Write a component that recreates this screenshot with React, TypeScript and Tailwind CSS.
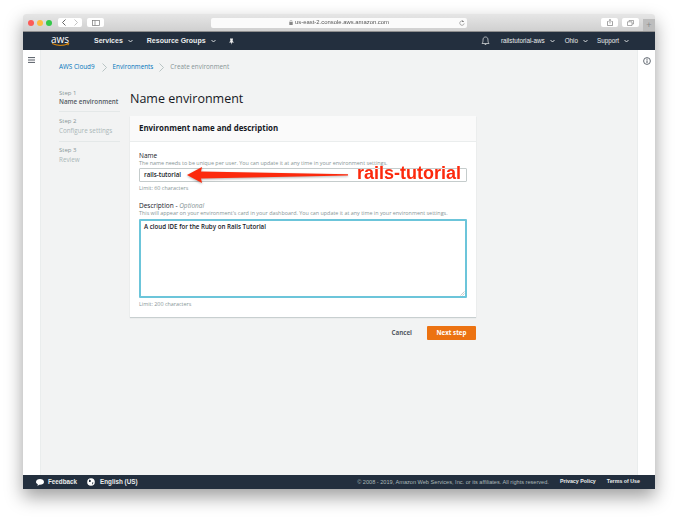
import React from "react";

const Caret = () => (
  <svg width="5" height="4" viewBox="0 0 5 4" className="ml-[5px]"><path d="M0.5 1 L2.5 3 L4.5 1" fill="none" stroke="currentColor" strokeWidth="0.9" /></svg>
);

const Chevron = () => (
  <svg width="5" height="9" viewBox="0 0 5 9" className="text-[#aab7b8]"><path d="M0.5 0.5 L4.5 4.5 L0.5 8.5" fill="none" stroke="currentColor" strokeWidth="0.8" /></svg>
);

function TitleBar() {
  return (
    <div className="h-[18px] bg-gradient-to-b from-[#e6e6e6] to-[#d0d0d0] border-b border-[#8f8f8f] flex items-center relative rounded-t-[3px] shrink-0">
      <div className="flex gap-[3px] ml-[5px]">
        <span className="w-[6px] h-[6px] rounded-full bg-[#fc5b57]" />
        <span className="w-[6px] h-[6px] rounded-full bg-[#fdbc40]" />
        <span className="w-[6px] h-[6px] rounded-full bg-[#34c84a]" />
      </div>
      <div className="flex ml-[6px] h-[9px] w-[24px] bg-white rounded-[2px] items-center">
        <svg width="12" height="9" viewBox="0 0 12 9"><path d="M7.5 1.5 L4.5 4.5 L7.5 7.5" fill="none" stroke="#555" strokeWidth="0.9" /></svg>
        <svg width="12" height="9" viewBox="0 0 12 9"><path d="M4.5 1.5 L7.5 4.5 L4.5 7.5" fill="none" stroke="#bbb" strokeWidth="0.9" /></svg>
      </div>
      <div className="ml-[5px] w-[17px] h-[9px] bg-white rounded-[2px] flex items-center justify-center">
        <svg width="8" height="6" viewBox="0 0 8 6"><rect x="0.5" y="0.5" width="7" height="5" fill="none" stroke="#777" strokeWidth="0.7" /><path d="M3 0.5 V5.5" stroke="#777" strokeWidth="0.7" /></svg>
      </div>
      <div className="ml-[107px] w-[256px] h-[10px] bg-[#fbfbfb] rounded-[2px] flex items-center justify-center relative text-[5.9px] text-[#555] font-['Liberation_Sans',sans-serif]">
        <svg width="4" height="5" viewBox="0 0 4 5" className="mr-[2px]"><rect x="0.3" y="2" width="3.4" height="3" fill="#888" /><path d="M1 2 V1.2 A1 1 0 0 1 3 1.2 V2" fill="none" stroke="#888" strokeWidth="0.5" /></svg>
        us-east-2.console.aws.amazon.com
        <svg width="6" height="6" viewBox="0 0 6 6" className="absolute right-[2px] top-[2px]"><path d="M4.8 1.8 A2.2 2.2 0 1 0 5.2 3.4" fill="none" stroke="#777" strokeWidth="0.6" /><path d="M3.4 0.3 L5 1.9 L3 2.1Z" fill="#777" /></svg>
      </div>
      <div className="ml-auto flex items-center h-full">
        <div className="w-[17px] h-[9px] bg-white rounded-[2px] flex items-center justify-center">
          <svg width="6" height="7" viewBox="0 0 6 7"><path d="M1.5 2.5 H0.5 V6.5 H5.5 V2.5 H4.5 M3 4.5 V0.5 M1.8 1.6 L3 0.5 L4.2 1.6" fill="none" stroke="#666" strokeWidth="0.6" /></svg>
        </div>
        <div className="ml-[4px] w-[17px] h-[9px] bg-white rounded-[2px] flex items-center justify-center">
          <svg width="7" height="6" viewBox="0 0 7 6"><path d="M2 1.5 V0.5 H6.5 V4 H5 M0.5 1.8 H5 V5.5 H0.5 Z" fill="none" stroke="#777" strokeWidth="0.6" /></svg>
        </div>
        <div className="ml-[4px] w-[12px] h-[12px] mt-[5px] bg-[#bdbdbd] flex items-center justify-center text-[9px] leading-none text-[#8a8a8a] font-['Liberation_Sans',sans-serif]">+</div>
      </div>
    </div>
  );
}

function TopNav() {
  return (
    <div className="h-[18px] bg-[#232f3e] flex items-center text-white text-[7px] font-bold shrink-0 font-['Liberation_Sans',sans-serif]">
      <div className="ml-[27px] w-[20px] flex flex-col items-center leading-none">
        <span className="text-[10px] font-normal leading-[7px] font-['Open_Sans',sans-serif]">aws</span>
        <svg width="19" height="4" viewBox="0 0 19 4"><path d="M1 0.5 Q9 4 17 1" fill="none" stroke="#f90" strokeWidth="0.9" /><path d="M15.5 0.6 L18 0.4 L17 2.4" fill="none" stroke="#f90" strokeWidth="0.7" /></svg>
      </div>
      <span className="ml-[24px] flex items-center text-[#eaeded]">Services<Caret /></span>
      <span className="ml-[14px] flex items-center text-[#eaeded]">Resource Groups<Caret /></span>
      <svg width="7" height="7" viewBox="0 0 7 7" className="ml-[12px]"><path d="M2 0.5 H5 L4.6 3 L6 4.5 H4 L3.5 6.8 L3 4.5 H1 L2.4 3 Z" fill="#eee" /></svg>
      <svg width="9" height="10" viewBox="0 0 9 10" className="ml-auto mr-[11px]"><path d="M1 7.5 C2 6.5 2 5 2 4 C2 2 3 1 4.5 1 C6 1 7 2 7 4 C7 5 7 6.5 8 7.5 Z M3.7 8.5 H5.3" fill="none" stroke="#eaeded" strokeWidth="0.7" /></svg>
      <span className="flex items-center font-normal text-[6.3px] text-[#eaeded]">railstutorial-aws<Caret /></span>
      <span className="ml-[10px] flex items-center font-normal text-[6.3px] text-[#eaeded]">Ohio<Caret /></span>
      <span className="ml-[9px] mr-[26px] flex items-center font-normal text-[6.3px] text-[#eaeded]">Support<Caret /></span>
    </div>
  );
}

function Steps() {
  return (
    <div className="w-[61px] mt-[18px] font-['Open_Sans',sans-serif] leading-none shrink-0">
      <div className="text-[6px] text-[#879596]">Step 1</div>
      <div className="mt-[3px] text-[6.3px] font-semibold text-[#545b64] whitespace-nowrap">Name environment</div>
      <div className="mt-[6px] border-t border-[#e4e8e8]" />
      <div className="mt-[6px] text-[6px] text-[#879596]">Step 2</div>
      <div className="mt-[4px] text-[6.3px] text-[#aab7b8] whitespace-nowrap">Configure settings</div>
      <div className="mt-[6px] border-t border-[#e4e8e8]" />
      <div className="mt-[5px] text-[6px] text-[#879596]">Step 3</div>
      <div className="mt-[4px] text-[6.3px] text-[#aab7b8]">Review</div>
    </div>
  );
}

function Form() {
  return (
    <div className="ml-[10px] w-[346px] font-['Open_Sans',sans-serif]">
      <h1 className="text-[12.5px] leading-[18px] mt-[18px] text-[#16191f] font-normal">Name environment</h1>
      <div className="mt-[8px] h-[201px] bg-white shadow-[0_1px_1px_0_#c8cfd0]">
        <div className="h-[26px] bg-[#fafafa] border-b border-[#eaeded] flex items-center pl-[9px] text-[7.9px] font-bold text-[#16191f]">
          Environment name and description
        </div>
        <div className="px-[9px]">
          <div className="mt-[9px] text-[6.5px] leading-[9px] text-[#16191f]">Name</div>
          <div className="text-[5.4px] leading-[6px] text-[#879596] whitespace-nowrap">The name needs to be unique per user. You can update it at any time in your environment settings.</div>
          <div className="mt-[2px] h-[14px] border border-[#c5cccc] rounded-[1px] bg-white pl-[4px] flex items-center text-[6.2px] text-[#16191f] font-semibold">rails-tutorial</div>
          <div className="mt-[3px] text-[5.4px] leading-[6px] text-[#879596]">Limit: 60 characters</div>
          <div className="mt-[10px] text-[6.5px] leading-[9px] text-[#16191f]">Description - <span className="italic text-[#879596]">Optional</span></div>
          <div className="text-[5.4px] leading-[6px] text-[#879596] whitespace-nowrap">This will appear on your environment's card in your dashboard. You can update it at any time in your environment settings.</div>
          <div className="mt-[3px] h-[79px] border-2 border-[#6cc5da] rounded-[1px] bg-white pl-[3px] pt-[1px] text-[6.2px] leading-[9px] text-[#16191f] font-semibold relative">
            A cloud IDE for the Ruby on Rails Tutorial
            <svg width="5" height="5" viewBox="0 0 5 5" className="absolute right-0 bottom-0"><path d="M0.5 4.5 L4.5 0.5 M2.5 4.5 L4.5 2.5" stroke="#999" strokeWidth="0.5" /></svg>
          </div>
          <div className="mt-[3px] text-[5.4px] leading-[6px] text-[#879596]">Limit: 200 characters</div>
        </div>
      </div>
      <div className="mt-[9px] flex items-center justify-end">
        <span className="text-[6.2px] font-bold text-[#545b64] mr-[15px]">Cancel</span>
        <span className="w-[49px] h-[14px] bg-[#ec7211] rounded-[1px] flex items-center justify-center text-white text-[6.2px] font-bold">Next step</span>
      </div>
    </div>
  );
}

function Footer() {
  return (
    <div className="h-[14px] bg-[#232f3e] flex items-center text-[6.3px] text-[#eaeded] font-['Liberation_Sans',sans-serif] shrink-0">
      <svg width="8" height="7" viewBox="0 0 8 7" className="ml-[13px]"><path d="M4 0 C6.2 0 8 1.2 8 3 C8 4.7 6.2 5.8 4 5.8 L3.2 5.8 L1.5 7 L1.8 5.3 C0.7 4.8 0 4 0 3 C0 1.2 1.8 0 4 0Z" fill="#fff" /></svg>
      <span className="ml-[4px] font-bold">Feedback</span>
      <svg width="8" height="8" viewBox="0 0 8 8" className="ml-[10px]"><circle cx="4" cy="4" r="3.8" fill="#fff" /><path d="M2 1.5 L4 2.5 L3.5 4 L2 4 Z M5 4.5 L6.5 4.5 L5.5 6.8 Z" fill="#232f3e" /></svg>
      <span className="ml-[5px] font-bold">English (US)</span>
      <span className="ml-auto text-[5.6px] text-[#aab7b8]">© 2008 - 2019, Amazon Web Services, Inc. or its affiliates. All rights reserved.</span>
      <span className="ml-[11px] text-[5.3px] font-bold">Privacy Policy</span>
      <span className="ml-[11px] mr-[15px] text-[5.3px] font-bold">Terms of Use</span>
    </div>
  );
}

export default function App() {
  return (
    <div className="w-[677px] h-[520px] bg-white pt-[14px] pl-[23px] overflow-hidden relative">
      <div className="w-[632px] h-[475px] flex flex-col shadow-[0_8px_18px_rgba(0,0,0,0.38)] rounded-t-[3px] blur-[0.35px]">
        <TitleBar />
        <TopNav />
        <div className="flex-1 flex min-h-0 bg-[#f2f3f3]">
          <div className="w-[18px] bg-white flex justify-center pt-[7px] shrink-0 border-r border-[#eaeded]">
            <svg width="7" height="6" viewBox="0 0 7 6"><path d="M0 0.6 H7 M0 3 H7 M0 5.4 H7" stroke="#545b64" strokeWidth="1" /></svg>
          </div>
          <div className="flex-1 pl-[18px]">
            <div className="mt-[13px] h-[9px] flex items-center text-[6.3px] font-['Open_Sans',sans-serif] text-[#0073bb] leading-none">
              <span>AWS Cloud9</span>
              <span className="mr-[6px] ml-[7px]"><Chevron /></span>
              <span>Environments</span>
              <span className="mx-[6px]"><Chevron /></span>
              <span className="text-[#879596]">Create environment</span>
            </div>
            <div className="flex">
              <Steps />
              <Form />
            </div>
          </div>
          <div className="w-[18px] bg-white flex justify-center pt-[7px] shrink-0 border-l border-[#eaeded]">
            <svg width="8" height="8" viewBox="0 0 8 8"><circle cx="4" cy="4" r="3.4" fill="none" stroke="#545b64" strokeWidth="0.9" /><path d="M4 3.4 V6" stroke="#545b64" strokeWidth="1" /><circle cx="4" cy="2.2" r="0.6" fill="#545b64" /></svg>
          </div>
        </div>
        <Footer />
      </div>
      {/* Red annotation over the page */}
      <svg width="165" height="18" viewBox="0 0 165 18" className="absolute left-[186px] top-[166px]" style={{ filter: "drop-shadow(0 1px 1px rgba(0,0,0,0.3))" }}>
        <path d="M1 9 L16 1 L15 5.5 L162 8.2 L162 9.4 L15 12.5 L16 17 Z" fill="#fc2a0d" />
      </svg>
      <div className="absolute left-[357px] top-[163px] text-[#fc2a0d] text-[18px] leading-[21px] font-bold font-['Liberation_Sans',sans-serif] [text-shadow:0_1px_1px_rgba(255,255,255,0.9)]">rails-tutorial</div>
    </div>
  );
}
